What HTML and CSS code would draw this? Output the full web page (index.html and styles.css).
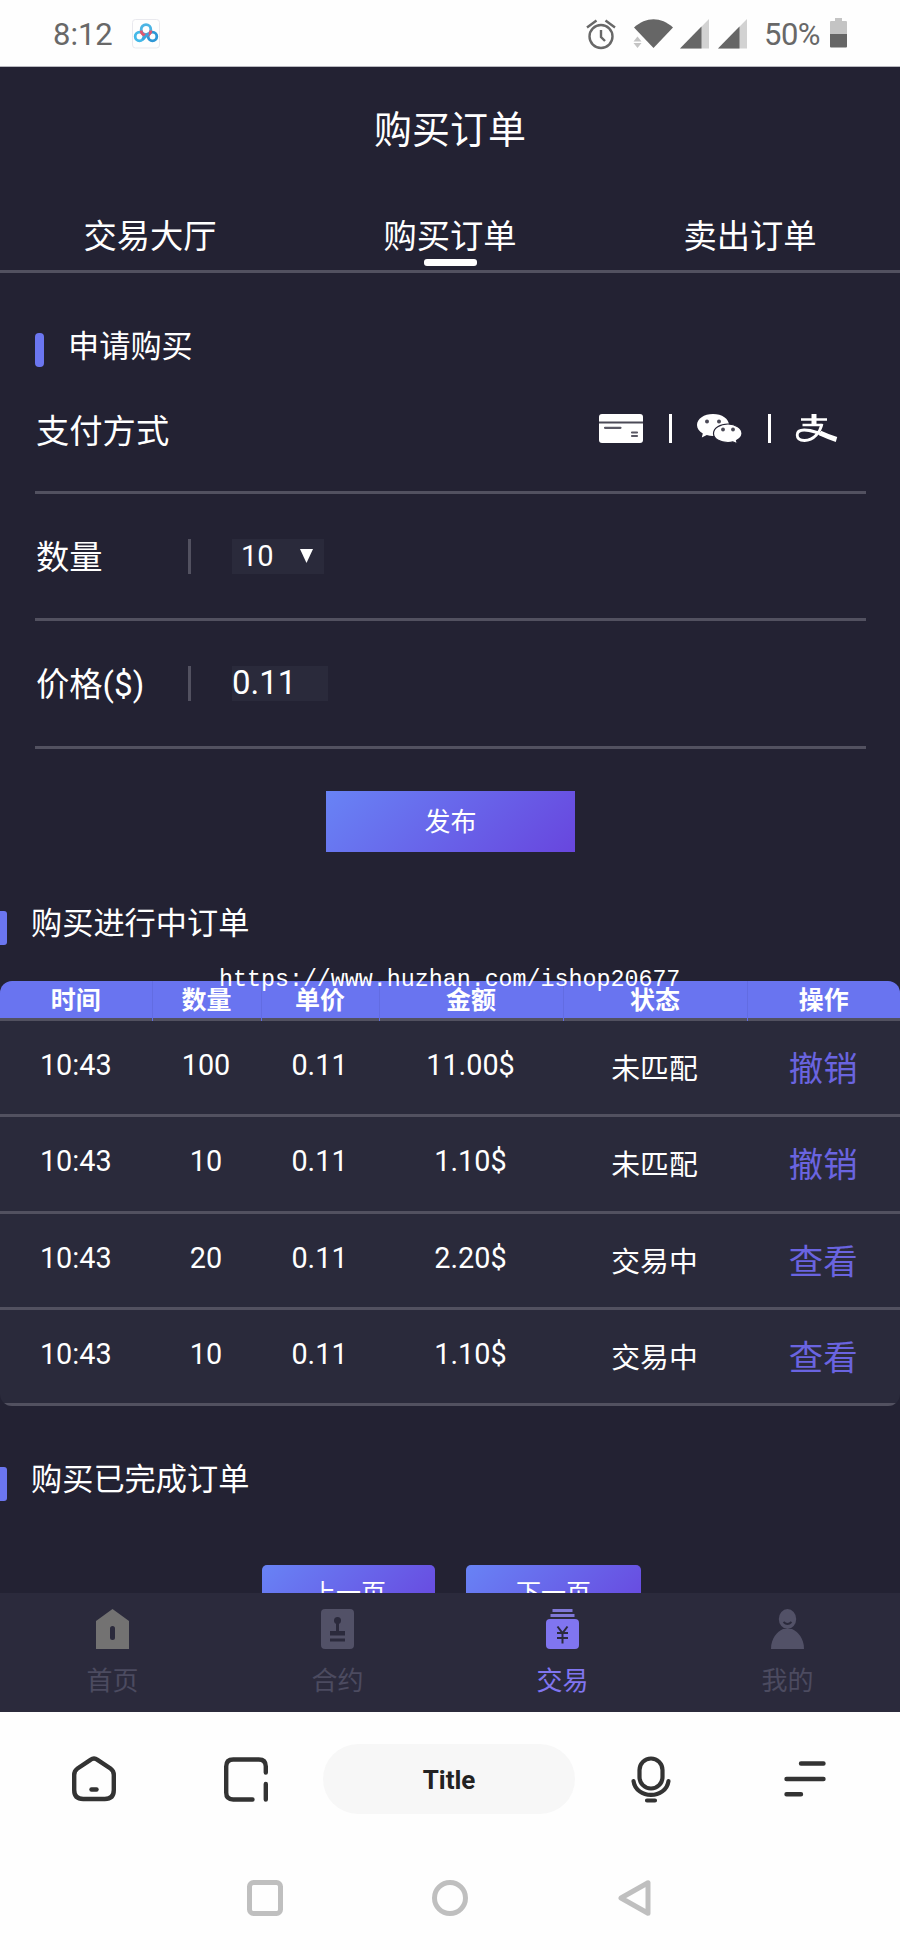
FILE: index.html
```html
<!DOCTYPE html>
<html lang="zh-CN">
  <head>
    <meta charset="UTF-8">
    <meta name="viewport" content="width=device-width, initial-scale=1.0">
    <title>购买订单</title>
    <link rel="stylesheet" href="styles.css">
  </head>
  <body>
    <div class="status-bar">
      <span class="time">8:12</span>
      <svg class="cloud-icon" width="28" height="30" viewBox="0 0 28 30" fill="none">
        <rect x=".5" y=".5" width="27" height="28.5" rx="3" stroke="#e9e9ee"/>
        <circle cx="7.500" cy="17.500" r="4.300" stroke="#45b9e8" stroke-width="2.800"/>
        <circle cx="20.500" cy="17.500" r="4.300" stroke="#2f97d6" stroke-width="2.800"/>
        <circle cx="14" cy="10.500" r="4.800" stroke="#4bb4e4" stroke-width="2.800"/>
        <path d="M9.200 11.500a4.800 4.800 0 0 0 9.600 0" stroke="#e2566f" stroke-width="3"/>
        <path d="M10.500 20.500l6-6" stroke="#3aa6de" stroke-width="3"/>
      </svg>
      <div class="status-right">
        <svg class="alarm" width="30" height="30" viewBox="0 0 30 30" fill="none" stroke="#686868" stroke-width="2.400">
          <circle cx="15" cy="17.500" r="11.500"/>
          <path d="M1 8.500l9.500-7M29 8.500l-9.500-7M15 11v7l4 4"/>
        </svg>
        <svg class="wifi" width="39" height="30" viewBox="0 0 39 30">
          <path d="M0 8.500C12-2.500 27-2.500 39 8.500L19.500 29z" fill="#666"/>
          <path d="M-.5 22.500l4-5 4 5zM-.5 24h8l-4 5z" fill="#c4c4c4"/>
        </svg>
        <svg class="signal" width="29" height="30" viewBox="0 0 29 30">
          <path d="M0 29.500L29 0v29.500z" fill="#d2d2d2"/>
          <path d="M0 29.500L21.500 7.500v22z" fill="#666"/>
        </svg>
        <svg class="signal" width="29" height="30" viewBox="0 0 29 30">
          <path d="M0 29.500L29 0v29.500z" fill="#d2d2d2"/>
          <path d="M0 29.500L21.500 7.500v22z" fill="#666"/>
        </svg>
        <span class="percent">50%</span>
        <svg class="battery" width="17" height="30" viewBox="0 0 17 30">
          <path d="M5 0h7v3h4q1 0 1 1v12H0V4q0-1 1-1h4z" fill="#c4c4c4"/>
          <path d="M0 16h17v12.500q0 1-1 1H1q-1 0-1-1z" fill="#666"/>
        </svg>
      </div>
    </div>

    <div class="page">
      <h1 class="page-title">购买订单</h1>
      <div class="tabs">
        <div class="tab">交易大厅</div>
        <div class="tab active">购买订单</div>
        <div class="tab">卖出订单</div>
      </div>

      <div class="apply">
        <h2 class="section-title">申请购买</h2>
        <div class="row row-pay">
          <span class="label">支付方式</span>
          <div class="pay-icons">
            <svg width="44" height="29" viewBox="0 0 44 29">
              <rect width="44" height="29" rx="3" fill="#fff"/>
              <path d="M0 8.500h44" stroke="#4b4a57" stroke-width="2"/>
              <path d="M6 13.800h15.500M33 18.500h5M33 22h5" stroke="#5a5965" stroke-width="2.200" stroke-linecap="round"/>
            </svg>
            <i class="bar"></i>
            <svg width="45" height="29" viewBox="0 0 45 29">
              <path d="M16 0C7 0 0 4.800 0 11c0 3.500 2.200 6.500 5.800 8.600L4.800 23.500l5-2.400c2 .6 4 .9 6.200.9 9 0 16-4.900 16-11S25 0 16 0z" fill="#fff"/>
              <path d="M31 10c-8 0-14.500 4.200-14.500 9.500S23 28.500 31 28.500c1.700 0 3.300-.2 4.800-.6l4.700 2-1-3.400c3.300-1.700 5.500-4.200 5.500-7C45 14.200 38.500 10 31 10z" fill="#fff" stroke="#232233" stroke-width="1.200"/>
              <g fill="#4b4a57"><circle cx="10" cy="7.500" r="2"/><circle cx="22" cy="7.500" r="2"/><circle cx="26" cy="15.500" r="1.900"/><circle cx="36" cy="15.500" r="1.900"/></g>
            </svg>
            <i class="bar"></i>
            <svg width="42" height="29" viewBox="0 0 42 29" fill="none" stroke="#fff">
              <path d="M5 5.500h26M6.500 11h20" stroke-width="2.600"/>
              <path d="M18 0v11" stroke-width="5"/>
              <path d="M26 10C24 18 18 26.500 8.500 26.500 3.500 26.500 1.200 24 1.200 21c0-3 2.600-5 7-5C17 16 26 20 38 25" stroke-width="2.800"/>
              <path d="M24 19c5 2.300 10 4.500 16.500 6.500" stroke-width="5"/>
            </svg>
          </div>
        </div>
        <div class="row row-count">
          <span class="label">数量</span>
          <i class="split"></i>
          <div class="select"><span>10</span><svg width="13" height="14" viewBox="0 0 13 14"><path d="M0 0h13L6.500 14z" fill="#fff"/></svg></div>
        </div>
        <div class="row row-price">
          <span class="label">价格($)</span>
          <i class="split"></i>
          <div class="price">0.11</div>
        </div>
        <button class="publish">发布</button>
      </div>

      <div class="orders">
        <h2 class="section-title">购买进行中订单</h2>
        <div class="watermark">https://www.huzhan.com/ishop20677</div>
        <div class="table">
          <div class="tr th"><span>时间</span><span>数量</span><span>单价</span><span>金额</span><span>状态</span><span>操作</span></div>
          <div class="tr"><span>10:43</span><span>100</span><span>0.11</span><span>11.00$</span><span class="state">未匹配</span><a class="action">撤销</a></div>
          <div class="tr"><span>10:43</span><span>10</span><span>0.11</span><span>1.10$</span><span class="state">未匹配</span><a class="action">撤销</a></div>
          <div class="tr"><span>10:43</span><span>20</span><span>0.11</span><span>2.20$</span><span class="state">交易中</span><a class="action">查看</a></div>
          <div class="tr"><span>10:43</span><span>10</span><span>0.11</span><span>1.10$</span><span class="state">交易中</span><a class="action">查看</a></div>
        </div>
      </div>

      <div class="finished">
        <h2 class="section-title">购买已完成订单</h2>
        <div class="pager">
          <button class="prev">上一页</button>
          <button class="next">下一页</button>
        </div>
      </div>
    </div>

    <div class="tabbar">
      <div class="item">
        <svg width="33" height="40" viewBox="0 0 33 40">
          <path d="M0 12L16.500 0 33 12v28H0z" fill="#737272"/>
          <rect x="14" y="17" width="5" height="14" rx="2.500" fill="#2b2a3c"/>
        </svg>
        <span>首页</span>
      </div>
      <div class="item">
        <svg width="33" height="40" viewBox="0 0 33 40">
          <rect width="33" height="40" rx="4" fill="#525167"/>
          <g fill="#2b2a3c"><circle cx="16.500" cy="11.500" r="3.500"/><path d="M15 13h3v9h6v4.500H9V22h6zM9 29.500h15V32.500H9z"/></g>
        </svg>
        <span>合约</span>
      </div>
      <div class="item on">
        <svg width="33" height="40" viewBox="0 0 33 40">
          <path d="M6.500 0h20v3h-20zM4.500 5h24v3h-24z" fill="#8078d8"/>
          <rect y="10" width="33" height="30" rx="4" fill="#8075f0"/>
          <path d="M11.500 17.500l5 6.500 5-6.500M11 24h11M11 29h11M16.500 24v10.500" stroke="#2b2a3c" stroke-width="2" fill="none"/>
        </svg>
        <span>交易</span>
      </div>
      <div class="item">
        <svg width="33" height="40" viewBox="0 0 33 40">
          <ellipse cx="16.500" cy="10" rx="8.700" ry="10" fill="#525167"/>
          <path d="M0 40c0-11 6-17 12-20h9c6 3 12 9 12 20z" fill="#525167"/>
          <path d="M12.500 13q4 4 8 0" stroke="#2b2a3c" stroke-width="1.800" fill="none"/>
        </svg>
        <span>我的</span>
      </div>
    </div>

    <div class="browser-bar">
      <svg width="44" height="46" viewBox="0 0 44 46" fill="none" stroke="#333" stroke-width="4.400" stroke-linecap="round" stroke-linejoin="round">
        <path d="M18.500 3.800L5.500 12.500Q2.200 14.800 2.200 19v15q0 9 9 9h21.600q9 0 9-9V19q0-4.200-3.300-6.500L25.500 3.800q-3.500-2.400-7 0z"/>
        <path d="M19.500 33.500h5"/>
      </svg>
      <svg width="44" height="45" viewBox="0 0 44 45" fill="none" stroke="#333" stroke-width="4.400" stroke-linecap="round">
        <path d="M28.500 42.500H9.200q-7 0-7-7V9.500q0-7 7-7h25.600q7 0 7 7v6M41.800 27v15.500"/>
      </svg>
      <div class="address">Title</div>
      <svg width="40" height="47" viewBox="0 0 40 47" fill="none" stroke="#333" stroke-width="4.200" stroke-linecap="round">
        <rect x="8.500" y="2.500" width="23" height="30" rx="11.500"/>
        <path d="M2.500 25C5 43.500 35 43.500 37.500 25M16 44.500h8"/>
      </svg>
      <svg width="42" height="36" viewBox="0 0 42 36" stroke="#333" stroke-width="4.400" stroke-linecap="round">
        <path d="M17 2.500h22.500M2.500 18h37M2.500 33.300h14.500"/>
      </svg>
    </div>
    <div class="system-nav">
      <svg width="36" height="36" viewBox="0 0 36 36" fill="none" stroke="#bfbfbf" stroke-width="5"><rect x="2.500" y="2.500" width="31" height="31" rx="4"/></svg>
      <svg width="36" height="36" viewBox="0 0 36 36" fill="none" stroke="#bfbfbf" stroke-width="5"><circle cx="18" cy="18" r="15.500"/></svg>
      <svg width="36" height="36" viewBox="0 0 36 36" fill="none" stroke="#bfbfbf" stroke-width="5" stroke-linejoin="round"><path d="M4 18L31 2.800v30.400z"/></svg>
    </div>
  </body>
</html>
```

FILE: styles.css
```css
* {
  box-sizing: border-box;
}
body {
  margin: 0;
  width: 900px;
  background: #fefefe;
  color: #fff;
  font-family: Roboto, "Noto Sans CJK SC", sans-serif;
}
svg {
  display: block;
  flex: none;
  overflow: visible;
}
h1, h2 {
  margin: 0;
  font-weight: 400;
}
button {
  border: none;
  padding: 0;
  color: #fff;
  font-family: inherit;
  background: linear-gradient(135deg, #6883f5, #6846de);
}

/* status bar */
.status-bar {
  display: flex;
  height: 67px;
  padding: 0 53px 0 53px;
  border-bottom: 1px solid #b9b9c0;
  color: #686868;
  font-size: 31px;
  line-height: 70px;
}
.time {
  width: 79px;
}
.cloud-icon {
  margin-top: 19px;
}
.status-right {
  display: flex;
  margin-left: auto;
}
.status-right svg {
  margin-top: 19px;
}
.status-right .wifi {
  margin-left: 18px;
}
.status-right .signal {
  margin-left: 7px;
}
.status-right .signal + .signal {
  margin-left: 9px;
}
.status-right .battery {
  margin-top: 18px;
}
.percent {
  width: 66px;
  margin: 0 0 0 17px;
  letter-spacing: -0.5px;
}

/* page */
.page {
  height: 1526px;
  overflow: hidden;
  background: #232233;
}
.page-title {
  height: 128px;
  font-size: 38px;
  line-height: 126px;
  text-align: center;
}
.tabs {
  display: grid;
  grid-template-columns: repeat(3, 1fr);
  height: 78px;
  border-bottom: 3px solid #525160;
  font-size: 33.3px;
  line-height: 84px;
  text-align: center;
}
.tab.active {
  display: flex;
  flex-direction: column;
  align-items: center;
}
.tab.active::after {
  content: "";
  width: 53px;
  height: 7px;
  margin-top: -20px;
  border-radius: 3px;
  background: #fff;
}
.section-title {
  display: flex;
  gap: 24px;
  font-size: 31.2px;
  line-height: 34px;
}
.section-title::before {
  content: "";
  width: 7px;
  height: 34px;
  margin-top: 4px;
  border-radius: 0 3px 3px 0;
  background: #6b76f0;
}
.apply {
  height: 634px;
  padding: 57px 34px 0 35px;
}
.apply .section-title {
  height: 42px;
}
.apply .section-title::before {
  width: 9px;
  margin-top: 3px;
  border-radius: 4px;
}
.row {
  display: flex;
  align-items: center;
  border-bottom: 3px solid #525160;
}
.row-pay {
  height: 122px;
}
.row-count {
  height: 127px;
}
.row-price {
  height: 128px;
}
.label {
  width: 153px;
  padding-left: 1px;
  font-size: 33.3px;
  line-height: 40px;
}
.row-count .label,
.row-price .label {
  padding-top: 3px;
}
.pay-icons {
  display: flex;
  gap: 25.5px;
  margin: -6px 28px 0 auto;
}
.bar {
  width: 3px;
  height: 29px;
  background: #fff;
}
.split {
  width: 3px;
  height: 35px;
  margin-right: 41px;
  background: #525160;
}
.select {
  display: flex;
  align-items: center;
  justify-content: space-between;
  width: 92px;
  height: 35px;
  padding: 0 11px 0 9px;
  background: #2a2a3b;
  font-size: 29px;
  line-height: 34px;
}
.price {
  width: 96px;
  height: 35px;
  background: #2a2a3b;
  font-size: 33px;
  line-height: 33px;
}
.publish {
  display: block;
  width: 249px;
  height: 61px;
  margin: 42px auto 0 291px;
  padding-bottom: 4px;
  font-size: 26px;
}

/* orders */
.orders {
  position: relative;
  height: 556px;
}
.orders .section-title {
  height: 74px;
}
.watermark {
  position: absolute;
  left: 219px;
  top: 59px;
  font-family: "Liberation Mono", monospace;
  font-size: 23.3px;
  line-height: 28px;
}
.table {
  overflow: hidden;
  border-radius: 12px;
  background: #2a2a3b;
}
.tr {
  display: grid;
  grid-template-columns: 151.5px 109px 118px 184px 184px 153.5px;
  height: 96.3px;
  border-bottom: 3px solid #525160;
  font-size: 28.8px;
  line-height: 88px;
  text-align: center;
}
.th {
  height: 40px;
  background: #6974f0;
  font-size: 25px;
  font-weight: 700;
  line-height: 40px;
}
.th span + span {
  border-left: 1px solid #626ce2;
}
.state {
  line-height: 97px;
}
.action {
  color: #6a64e0;
  font-size: 34.4px;
  line-height: 97px;
}
.pager {
  display: flex;
  gap: 31px;
  margin-left: 262px;
  padding-top: 64px;
}
.pager button {
  width: 173px;
  height: 54px;
  padding-bottom: 2px;
  border-radius: 5px;
  font-size: 25px;
}
.pager .next {
  width: 175px;
}

/* bottom tabs */
.tabbar {
  display: grid;
  grid-template-columns: repeat(4, 1fr);
  height: 119px;
  background: #2b2a3c;
  color: #4c4b60;
  font-size: 26px;
}
.item {
  display: flex;
  flex-direction: column;
  align-items: center;
  gap: 16px;
  padding-top: 16px;
  line-height: 32px;
}
.item.on {
  color: #8075f0;
}

/* browser */
.browser-bar {
  display: flex;
  align-items: center;
  height: 134px;
  padding: 0 74px 0 72px;
}
.browser-bar svg:nth-child(2) {
  margin: 0 55px 0 108px;
}
.address {
  width: 252px;
  height: 70px;
  margin-right: 56px;
  border-radius: 35px;
  background: #f7f7f7;
  color: #222;
  font-size: 26px;
  font-weight: 700;
  line-height: 72px;
  text-align: center;
}
.browser-bar svg:last-child {
  margin-left: auto;
}
.system-nav {
  display: flex;
  justify-content: center;
  gap: 149px;
  height: 104px;
  padding-top: 34px;
}
```
